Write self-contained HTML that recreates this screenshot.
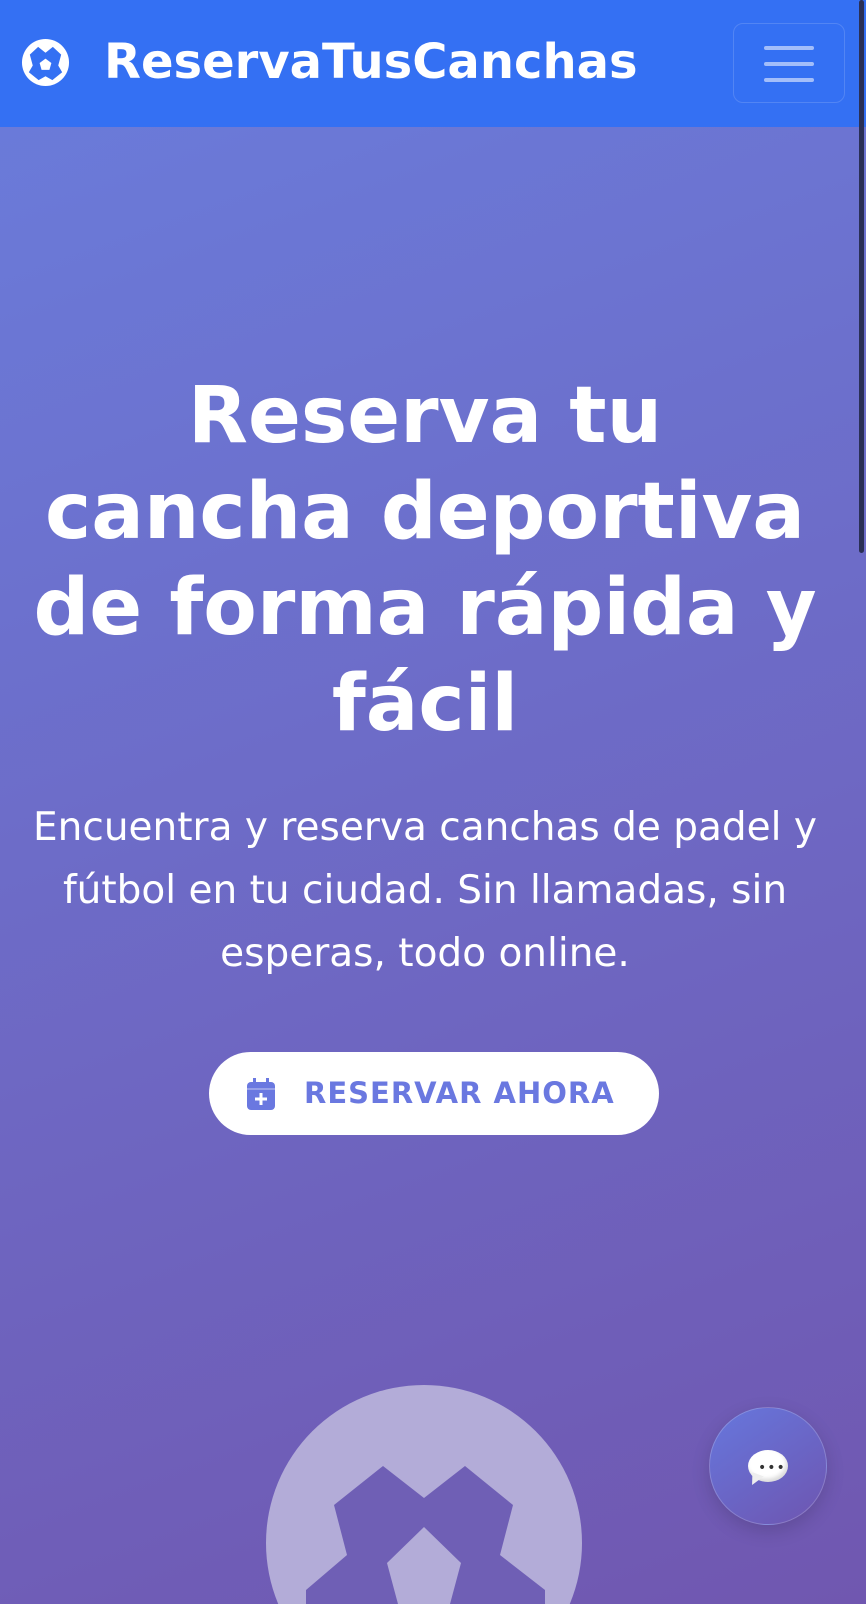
<!DOCTYPE html>
<html><head><meta charset="utf-8">
<style>
*{margin:0;padding:0;box-sizing:border-box}
html,body{width:866px;height:1604px;overflow:hidden}
body{font-family:"DejaVu Sans","Liberation Sans",sans-serif;background:linear-gradient(160deg,#6a7ddc 0%,#6d6cc8 45%,#7057b0 100%);position:relative}
.nav{position:absolute;left:0;top:0;width:866px;height:127px;background:#3470f3}
.brand{position:absolute;left:104px;top:34px;color:#fff;font-weight:bold;font-size:48px;letter-spacing:0}
.tog{position:absolute;left:733px;top:23px;width:112px;height:80px;border:1px solid rgba(255,255,255,.15);border-radius:10px}
.tog i{position:absolute;left:30px;width:50px;height:4px;background:rgba(255,255,255,.55);border-radius:2px}
.sb{position:absolute;left:859px;top:0;width:5px;height:553px;background:#2a2f55;border-radius:3px}
h1{position:absolute;left:0;top:368px;width:850px;text-align:center;color:#fff;font-weight:bold;font-size:78px;line-height:96px;white-space:nowrap}
p{position:absolute;left:0;top:796px;width:850px;text-align:center;color:#fff;font-size:39px;line-height:63px;white-space:nowrap}
.btn{position:absolute;left:209px;top:1052px;width:450px;height:83px;background:#fff;border-radius:42px;color:#6a78e0;font-weight:bold;font-size:29px;letter-spacing:1px;line-height:83px}
.btn span{position:absolute;left:95px}
.chat{position:absolute;left:709px;top:1407px;width:118px;height:118px;border-radius:50%;background:linear-gradient(145deg,#6677dd,#6e55b0);border:1px solid rgba(255,255,255,.2);box-shadow:0 6px 18px rgba(0,0,0,.15)}
</style></head><body>
<div class="nav">
<svg style="position:absolute;left:21px;top:38px" width="49" height="49" viewBox="0 0 100 100"><circle cx="50" cy="50" r="48" fill="#fff"/><polygon points="35,18 50,30 65,18 82,34 76,56 84,70 64,86 50,78 36,86 16,70 24,56 18,34" fill="#3470f3"/><polygon points="50,42 62,51 58,65 42,65 38,51" fill="#fff"/></svg>
<div class="brand">ReservaTusCanchas</div>
<div class="tog"><i style="top:22px"></i><i style="top:38px"></i><i style="top:54px"></i></div>
</div>
<div class="sb"></div>
<h1>Reserva tu<br>cancha deportiva<br>de forma rápida y<br>fácil</h1>
<p>Encuentra y reserva canchas de padel y<br>fútbol en tu ciudad. Sin llamadas, sin<br>esperas, todo online.</p>
<div class="btn"><svg style="position:absolute;left:38px;top:26px" width="28" height="32" viewBox="0 0 28 32"><rect x="6" y="0" width="3" height="6" fill="#6a78e0"/><rect x="19" y="0" width="3" height="6" fill="#6a78e0"/><rect x="0" y="4" width="28" height="28" rx="4" fill="#6a78e0"/><rect x="0" y="10" width="28" height="2" fill="#fff" opacity=".3"/><rect x="12.5" y="15" width="3" height="12" fill="#fff"/><rect x="8" y="19.5" width="12" height="3" fill="#fff"/></svg><span>RESERVAR AHORA</span></div>
<svg style="position:absolute;left:0;top:0" width="866" height="1604"><circle cx="424" cy="1543" r="158" fill="#b3acd8"/><polygon points="383,1466 424,1498 465,1466 513,1505 500,1555 545,1590 545,1604 306,1604 306,1590 347,1555 334,1505" fill="#6f5fb5"/><polygon points="424,1527 461,1563 450,1604 398,1604 387,1563" fill="#b3acd8"/></svg>
<div class="chat"><div style="position:absolute;left:38px;top:42px;width:40px;height:32px;border-radius:50%;background:#fff;box-shadow:inset -2px -3px 4px rgba(0,0,0,.15)"></div><div style="position:absolute;left:40px;top:66px;width:0;height:0;border-left:4px solid transparent;border-right:8px solid transparent;border-top:12px solid #eee;transform:rotate(20deg)"></div><div style="position:absolute;left:48px;top:55px;font-size:14px;line-height:10px;color:#333;letter-spacing:1px">•••</div></div>
</body></html>
